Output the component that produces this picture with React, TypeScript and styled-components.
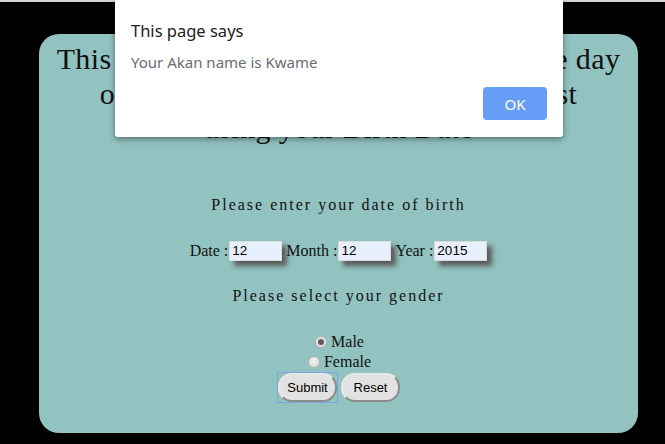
import React from 'react'
import styled, { createGlobalStyle } from 'styled-components'

const GlobalStyle = createGlobalStyle`
  html, body {
    margin: 0;
    padding: 0;
    background: #000;
    font-family: "Liberation Serif", "Times New Roman", serif;
  }
`;

const Page = styled.div`
  position: relative;
  width: 665px;
  height: 444px;
  overflow: hidden;
  background: #000;
`;

const ChromeLine = styled.div`
  height: 2px;
  background: #d2d2d2;
`;

const Card = styled.form`
  box-sizing: border-box;
  width: 599px;
  height: 399px;
  margin: 32px 0 0 39px;
  padding: 8px 8px 0;
  background: #92c3c1;
  border-radius: 20px;
  display: flex;
  flex-direction: column;
  align-items: center;
  color: #111;
`;

const Heading = styled.h1`
  margin: 0;
  font-size: 30px;
  font-weight: normal;
  letter-spacing: 0.4px;
  line-height: 34.5px;
  text-align: center;
  white-space: nowrap;
`;

const Prompt = styled.p<{ $top: number }>`
  margin: ${p => p.$top}px 0 0;
  font-size: 16px;
  letter-spacing: 2px;
  line-height: 18px;
`;

const DateRow = styled.div`
  display: flex;
  align-items: center;
  gap: 4px;
  margin-top: 27px;
  font-size: 16px;
`;

const Field = styled.label`
  display: flex;
  align-items: center;
  gap: 1px;
`;

const DateInput = styled.input`
  box-sizing: border-box;
  width: 53px;
  height: 20px;
  padding: 0 2px;
  border: 1px solid #dcdcdc;
  background: #e8f0fe;
  font-family: "Liberation Sans", Arial, sans-serif;
  font-size: 13.5px;
  color: #000;
  box-shadow: 5px 5px 5px #5a5a5a;
  outline: none;
`;

const RadioGroup = styled.div`
  display: flex;
  flex-direction: column;
  align-items: center;
  margin-top: 27px;
  font-size: 16px;
`;

const RadioLine = styled.label`
  display: flex;
  align-items: center;
  gap: 4px;
  height: 20px;
  padding-left: 2px;
`;

const Radio = styled.input`
  appearance: none;
  box-sizing: border-box;
  width: 12px;
  height: 12px;
  margin: 0;
  border-radius: 50%;
  border: 1px solid #b4b4b4;
  background: radial-gradient(circle at 50% 40%, #f4f4f4, #d4d4d4);
  position: relative;
  &:checked::after {
    content: '';
    position: absolute;
    left: 2px;
    top: 2px;
    width: 6px;
    height: 6px;
    border-radius: 50%;
    background: #5a5a5a;
  }
`;

const Buttons = styled.div`
  display: flex;
  align-items: center;
  gap: 3px;
`;

const FocusFrame = styled.span`
  display: flex;
  border: 1.5px solid #7ba6e3;
`;

const PillButton = styled.button`
  box-sizing: border-box;
  width: 59px;
  height: 29px;
  padding: 0;
  border: 2px solid;
  border-color: #e8e8e8 #8c8c8c #8c8c8c #e8e8e8;
  border-radius: 14px;
  background: #e2e2e2;
  font-family: "Liberation Sans", Arial, sans-serif;
  font-size: 13px;
  color: #000;
  outline: none;
`;

const Dialog = styled.div`
  position: absolute;
  left: 115px;
  top: 0;
  box-sizing: border-box;
  width: 448px;
  height: 137px;
  padding: 19px 16px 0;
  background: #fff;
  border-radius: 0 0 3px 3px;
  box-shadow: 0 2px 6px rgba(0, 0, 0, 0.45);
  font-family: "Noto Sans", "Open Sans", sans-serif;
  display: flex;
  flex-direction: column;
`;

const DialogTitle = styled.div`
  font-size: 16.5px;
  color: #202124;
`;

const DialogMessage = styled.div`
  margin-top: 10px;
  font-size: 15px;
  color: #676b72;
`;

const DialogActions = styled.div`
  display: flex;
  justify-content: flex-end;
  margin-top: 15px;
`;

const OkButton = styled.button`
  width: 64px;
  height: 33px;
  border: none;
  border-radius: 4px;
  background: #669df6;
  color: #fff;
  font-family: "Noto Sans", "Open Sans", sans-serif;
  font-size: 15px;
`;

const App = () => {
  return (
    <Page>
      <GlobalStyle />
      <ChromeLine />
      <Card onSubmit={e => e.preventDefault()}>
        <Heading>
          This site tells you the Akan name and the day
          <br />
          of the week you were born on. We just
          <br />
          using your Birth Date
        </Heading>
        <Prompt $top={50}>Please enter your date of birth</Prompt>
        <DateRow>
          <Field>Date :<DateInput defaultValue="12" /></Field>
          <Field>Month :<DateInput defaultValue="12" /></Field>
          <Field>Year :<DateInput defaultValue="2015" /></Field>
        </DateRow>
        <Prompt $top={26}>Please select your gender</Prompt>
        <RadioGroup>
          <RadioLine><Radio type="radio" name="gender" defaultChecked />Male</RadioLine>
          <RadioLine><Radio type="radio" name="gender" />Female</RadioLine>
        </RadioGroup>
        <Buttons>
          <FocusFrame>
            <PillButton type="submit">Submit</PillButton>
          </FocusFrame>
          <PillButton type="reset">Reset</PillButton>
        </Buttons>
      </Card>
      <Dialog>
        <DialogTitle>This page says</DialogTitle>
        <DialogMessage>Your Akan name is Kwame</DialogMessage>
        <DialogActions>
          <OkButton>OK</OkButton>
        </DialogActions>
      </Dialog>
    </Page>
  )
}

export default App
